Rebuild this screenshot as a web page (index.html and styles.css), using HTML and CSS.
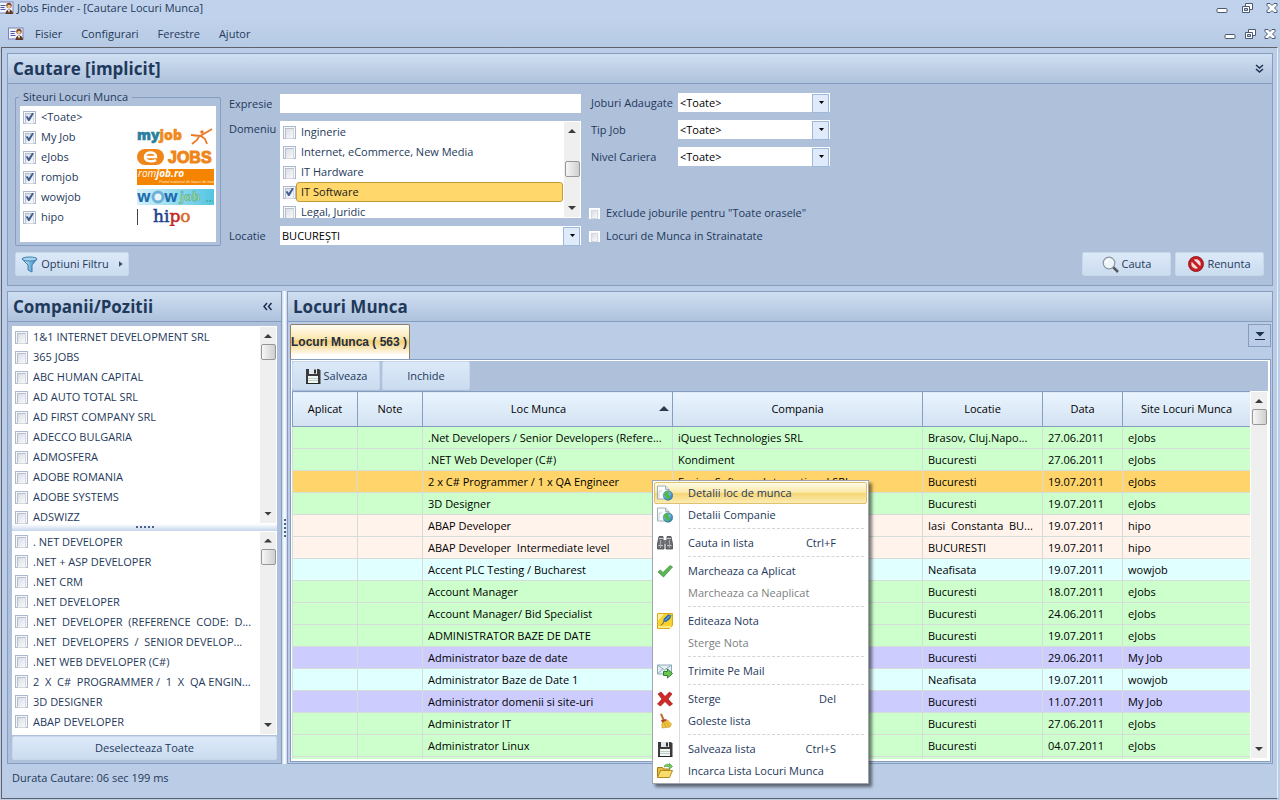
FILE: index.html
```html
<!DOCTYPE html>
<html lang="ro">
  <head>
    <meta charset="UTF-8" />
    <meta name="viewport" content="width=device-width, initial-scale=1.0" />
    <title>Jobs Finder - [Cautare Locuri Munca]</title>
    <link rel="stylesheet" href="styles.css">
  </head>
  <body>
    <svg class="sprite" width="0" height="0" aria-hidden="true">
      <defs>
        <linearGradient id="g-funnel" x1="0" x2="1">
          <stop offset="0" stop-color="#e6f5fc" />
          <stop offset="0.5" stop-color="#7fbbe0" />
          <stop offset="1" stop-color="#2c78b4" />
        </linearGradient>
        <linearGradient id="g-wow" x1="0" x2="1">
          <stop offset="0" stop-color="#d4f1fa" />
          <stop offset="1" stop-color="#52c4e2" />
        </linearGradient>
        <radialGradient id="g-globe" cx="0.35" cy="0.3" r="0.8">
          <stop offset="0" stop-color="#a8e0f8" />
          <stop offset="1" stop-color="#1c6fb4" />
        </radialGradient>
      </defs>
      <symbol id="i-app" viewBox="0 0 16 14">
        <rect x="0.5" y="1" width="14.5" height="11" fill="#f3f3fc" stroke="#7b83b8" />
        <path d="M2.500 4.500h5M2.500 6.500h4M2.500 8.500h5" stroke="#4a5aa8" />
        <circle cx="11" cy="4.500" r="2.700" fill="#7a4a22" />
        <circle cx="11" cy="5.500" r="1.800" fill="#f0c08c" />
        <path d="M7.500 13c0-6 7.500-6 7.500 0z" fill="#5f3a1e" />
        <path d="M10 9l1 3 1-3z" fill="#fff" />
      </symbol>
      <symbol id="i-min" viewBox="0 0 12 12">
        <rect x="1" y="6.500" width="10" height="4" rx="1" fill="#fff" stroke="#4b5a72" />
      </symbol>
      <symbol id="i-restore" viewBox="0 0 12 12">
        <path d="M4.500 1.500h7v6h-7z" fill="#fff" stroke="#4b5a72" />
        <path d="M1.500 4.500h7v6h-7z" fill="#fff" stroke="#4b5a72" />
        <path d="M3.500 6.500h3v2h-3z" fill="#b9cbe4" stroke="#4b5a72" />
      </symbol>
      <symbol id="i-close" viewBox="0 0 12 12">
        <path d="M1 1.500h3l2 2 2-2h3v2l-2.500 2.500 2.500 2.500v2H8l-2-2-2 2H1v-2L3.500 6 1 3.500z" fill="#fff" stroke="#4b5a72" />
      </symbol>
      <symbol id="i-floppy" viewBox="0 0 16 16">
        <path d="M1 1h13l1.500 1.500V15H1z" fill="#3c3a3a" />
        <rect x="4" y="1" width="8" height="5" fill="#dfe8ee" />
        <rect x="9" y="1.500" width="2" height="4" fill="#333" />
        <rect x="3" y="8" width="10" height="7" fill="#f4f6f6" />
        <path d="M3 10.500h10M3 12.500h10" stroke="#b9d2c4" />
        <path d="M1 15.500h14.500" stroke="#1f2b27" />
      </symbol>
      <symbol id="i-docglobe" viewBox="0 0 16 16">
        <path d="M0.500 1h8l3.500 3.500V14H0.500z" fill="#fbfcfd" stroke="#9fb0b8" />
        <path d="M8.500 1v3.500H12" fill="#dfe6ea" stroke="#9fb0b8" />
        <path d="M2 14V6h3" fill="none" stroke="#c7d2d8" />
        <circle cx="11" cy="10.500" r="4.800" fill="url(#g-globe)" stroke="#3b6f94" stroke-width="0.500" />
        <path d="M7 9c1-2.500 4-3.500 5-2.500s-1 1.500-.5 3 2 1 1.500 2.500-2 3-3 2.500-.5-2-1.500-3S7 10.500 7 9z" fill="#4fb848" />
      </symbol>
      <symbol id="i-binoc" viewBox="0 0 16 16">
        <path d="M2 1.500h4v3l1 1v8.500H0.500V9zM14 1.500h-4v3l-1 1v8.500h6.500V9z" fill="#6d6f73" stroke="#48494c" stroke-width="0.800" />
        <rect x="6.500" y="5" width="3" height="4" fill="#77797d" />
        <path d="M2 3.500h4M10 3.500h4M1.500 10.500h4.500M10 10.500h4.500" stroke="#c9cbce" />
        <path d="M3.500 5v8M12.500 5v8" stroke="#a7a9ac" />
      </symbol>
      <symbol id="i-check" viewBox="0 0 16 16">
        <path d="M1 9l2.500-2L6 9.500 13 2.500 15.500 4 6.500 14z" fill="#5cb655" stroke="#3b8a3a" stroke-width="0.700" />
      </symbol>
      <symbol id="i-note" viewBox="0 0 16 16">
        <path d="M0.500 0.500h15v12l-3 3h-12z" fill="#f8d12e" stroke="#d9a91b" />
        <path d="M1 1h6l-6 7z" fill="#fdf0a4" />
        <path d="M1 13h13v2H1z" fill="#fbe886" />
        <path d="M14.500 2l-3.500-.5-4 4-1 3 3 .5 4-3z" fill="#2a67a8" />
        <path d="M13 2.500l-5 5" stroke="#9cc6ea" />
        <path d="M7 9l-3 3.500" stroke="#555" />
      </symbol>
      <symbol id="i-mail" viewBox="0 0 16 16">
        <path d="M0.500 2h14v9h-14z" fill="#e6eff5" stroke="#8ea9b9" />
        <path d="M0.500 2l7 5 7-5M0.500 11l5-5M14.500 11l-5-5" fill="none" stroke="#8ea9b9" />
        <path d="M6.500 8.500h4V6l5 4.500-5 4.500v-2.500h-4z" fill="#6cc451" stroke="#2f8430" />
      </symbol>
      <symbol id="i-x" viewBox="0 0 16 16">
        <path d="M1 3l3-2 4 4.500L12.500 1 15 3l-4 5 4.500 5-3 2L8 10.500 3.500 15 0.500 13 5 8z" fill="#cf2a27" stroke="#9d1b1b" stroke-width="0.700" />
      </symbol>
      <symbol id="i-broom" viewBox="0 0 16 16">
        <path d="M3 1l2-.500 2.500 6-2 .5z" fill="#b9702e" />
        <path d="M4 7l5-1 1.500 2-5 2.500z" fill="#b3392c" />
        <path d="M5 10l5.500-3 4 4-1.500 3-8 1z" fill="#f3c83d" stroke="#c8962a" stroke-width="0.700" />
        <path d="M7 10l2 4M9 9l3 4" stroke="#b98c25" stroke-width="0.700" />
      </symbol>
      <symbol id="i-folder" viewBox="0 0 16 16">
        <path d="M0.500 14.500V4.500h5l1 1.500h6v3" fill="#e9b93b" stroke="#a97d1a" />
        <path d="M0.500 14.500l3-7h12l-3 7z" fill="#fadc6c" stroke="#b58a22" />
        <path d="M7 4c1-3 4-3.500 5.500-2V.5l3 3-3 2.500V4.500C11 3 9 3 7 4z" fill="#7acb62" stroke="#43953a" stroke-width="0.700" />
      </symbol>
    </svg>

    <header class="titlebar">
      <svg class="title-icon" width="16" height="14"><use href="#i-app" /></svg>
      <span class="title">Jobs Finder - [Cautare Locuri Munca]</span>
      <div class="win-controls">
        <button type="button" aria-label="Minimizare"><svg width="12" height="12"><use href="#i-min" /></svg></button>
        <button type="button" aria-label="Restaurare"><svg width="12" height="12"><use href="#i-restore" /></svg></button>
        <button type="button" aria-label="Inchidere"><svg width="12" height="12"><use href="#i-close" /></svg></button>
      </div>
    </header>
    <nav class="menubar">
      <svg width="16" height="14"><use href="#i-app" /></svg>
      <button type="button">Fisier</button>
      <button type="button">Configurari</button>
      <button type="button">Ferestre</button>
      <button type="button">Ajutor</button>
      <div class="win-controls child">
        <button type="button" aria-label="Minimizare"><svg width="12" height="12"><use href="#i-min" /></svg></button>
        <button type="button" aria-label="Restaurare"><svg width="12" height="12"><use href="#i-restore" /></svg></button>
        <button type="button" aria-label="Inchidere"><svg width="12" height="12"><use href="#i-close" /></svg></button>
      </div>
    </nav>

    <main class="workspace">
      <section class="panel search">
        <div class="panel-head">
          <h2>Cautare [implicit]</h2>
          <button type="button" class="fold" aria-label="Restrange">
            <svg width="9" height="10" viewBox="0 0 9 10"><path d="M1 1l3.500 3L8 1M1 5l3.500 3L8 5" fill="none" stroke="#1b2f50" stroke-width="1.500" /></svg>
          </button>
        </div>
        <form class="search-body">
          <div class="fields">
            <fieldset class="sites">
              <legend>Siteuri Locuri Munca</legend>
              <div class="site-list">
                <label><input type="checkbox" checked /><span>&lt;Toate&gt;</span></label>
                <label><input type="checkbox" checked /><span>My Job</span>
                  <svg class="logo" width="77" height="20" viewBox="0 0 77 20">
                    <text x="0" y="13" font-family="Open Sans" font-weight="800" font-size="14" fill="#2b7fa0" stroke="#2b7fa0" stroke-width="0.500">my<tspan fill="#f08a1c" stroke="#f08a1c">job</tspan></text>
                    <path d="M54 8l9 1 7-4 5-3M63 8l-3 5-5 4M64 9l4 3 2 5" fill="none" stroke="#ea7a28" stroke-width="1.800" />
                    <circle cx="65" cy="5" r="1.800" fill="#ea7a28" />
                  </svg>
                </label>
                <label><input type="checkbox" checked /><span>eJobs</span>
                  <svg class="logo" width="77" height="18" viewBox="0 0 77 18">
                    <rect x="0" y="1" width="27" height="16" rx="8" fill="#f08519" />
                    <path d="M8 9h11c0-6-11-6-11 0 0 5 8 5 11 3" fill="none" stroke="#fff" stroke-width="2.500" />
                    <text x="31" y="15" font-family="Liberation Sans" font-weight="700" font-size="16" fill="#f08519" stroke="#f08519">JOBS</text>
                  </svg>
                </label>
                <label><input type="checkbox" checked /><span>romjob</span>
                  <svg class="logo" width="77" height="16" viewBox="0 0 77 16">
                    <rect width="77" height="16" fill="#f58400" />
                    <text x="1" y="8" font-family="Open Sans" font-style="italic" font-size="10" fill="#fff">rom<tspan font-weight="700">job.ro</tspan></text>
                    <text x="22" y="14" font-family="Liberation Sans" font-style="italic" font-size="4" fill="#ffe9c8">Portal national de locuri de munca</text>
                  </svg>
                </label>
                <label><input type="checkbox" checked /><span>wowjob</span>
                  <svg class="logo" width="77" height="16" viewBox="0 0 77 16">
                    <rect width="77" height="16" fill="url(#g-wow)" />
                    <text x="0" y="13" font-family="Open Sans" font-weight="700" font-size="16" fill="#1c6cae">w</text>
                    <circle cx="21" cy="8" r="5" fill="#e8f6fb" stroke="#6fb0d8" stroke-width="3" />
                    <text x="27" y="13" font-family="Open Sans" font-weight="700" font-size="16" fill="#1c6cae">w</text>
                    <text x="43" y="12" font-family="Open Sans" font-weight="700" font-size="13" fill="#a9dd84" stroke="#3f9fae" stroke-width="0.500">job</text>
                    <path d="M69 12h7" stroke="#3aa06a" stroke-dasharray="2 1" />
                  </svg>
                </label>
                <label><input type="checkbox" checked /><span>hipo</span>
                  <svg class="logo" width="77" height="18" viewBox="0 0 77 18">
                    <path d="M0.500 1v16" stroke="#3c4654" />
                    <text x="16" y="14" font-family="DejaVu Serif" font-size="17" fill="#1d3d8f" stroke="#1d3d8f" stroke-width="0.500">hi<tspan fill="#c3271f" stroke="#c3271f">p</tspan><tspan fill="#d9672a" stroke="#d9672a">o</tspan></text>
                  </svg>
                </label>
              </div>
            </fieldset>

            <div class="criteria">
              <label for="expresie">Expresie</label>
              <input type="text" id="expresie" />
              <span class="top-label">Domeniu</span>
              <div class="listbox domain">
                <div class="rows">
                  <label><input type="checkbox" /><span>Inginerie</span></label>
                  <label><input type="checkbox" /><span>Internet, eCommerce, New Media</span></label>
                  <label><input type="checkbox" /><span>IT Hardware</span></label>
                  <label class="picked"><input type="checkbox" checked /><span>IT Software</span></label>
                  <label><input type="checkbox" /><span>Legal, Juridic</span></label>
                </div>
                <div class="scroll middle"><i class="up"></i><i class="thumb"></i><i class="down"></i></div>
              </div>
              <label for="locatie">Locatie</label>
              <div class="combo"><select id="locatie"><option>BUCUREŞTI</option></select></div>
            </div>

            <div class="options">
              <div class="combos">
                <label for="adaugate">Joburi Adaugate</label>
                <div class="combo"><select id="adaugate"><option>&lt;Toate&gt;</option></select></div>
                <label for="tip">Tip Job</label>
                <div class="combo"><select id="tip"><option>&lt;Toate&gt;</option></select></div>
                <label for="nivel">Nivel Cariera</label>
                <div class="combo"><select id="nivel"><option>&lt;Toate&gt;</option></select></div>
              </div>
              <div class="flags">
                <label><input type="checkbox" class="flat" />Exclude joburile pentru "Toate orasele"</label>
                <label><input type="checkbox" class="flat" />Locuri de Munca in Strainatate</label>
              </div>
            </div>
          </div>
          <div class="actions">
            <button type="button" class="btn filter">
              <svg width="17" height="17" viewBox="0 0 17 17"><path d="M1 3l6 6v5l4 2V9l5-6z" fill="url(#g-funnel)" stroke="#3b7fae" /><ellipse cx="8.500" cy="3" rx="7.500" ry="2" fill="#a8d4ee" stroke="#3b7fae" /></svg>
              Optiuni Filtru
              <i class="more"></i>
            </button>
            <button type="button" class="btn go">
              <svg width="17" height="17" viewBox="0 0 17 17"><path d="M11 11l5 5" stroke="#55595f" stroke-width="2.500" /><circle cx="7" cy="7" r="5.800" fill="#eef5fa" stroke="#8d949c" stroke-width="1.200" /><path d="M4 7a3 3 0 0 1 3-3" fill="none" stroke="#fff" stroke-width="1.500" /></svg>
              Cauta
            </button>
            <button type="button" class="btn go">
              <svg width="16" height="16" viewBox="0 0 16 16"><circle cx="8" cy="8" r="6.200" fill="#f3dede" stroke="#c22026" stroke-width="3" /><path d="M4 4l8 8" stroke="#c22026" stroke-width="3" /><circle cx="8" cy="8" r="7.500" fill="none" stroke="#8f161b" stroke-width="0.700" /></svg>
              Renunta
            </button>
          </div>
        </form>
      </section>

      <div class="lower">
        <aside class="panel companies">
          <div class="panel-head">
            <h2>Companii/Pozitii</h2>
            <button type="button" class="fold" aria-label="Ascunde">
              <svg width="10" height="9" viewBox="0 0 10 9"><path d="M4 1L1 4.500 4 8M8.500 1l-3 3.500 3 3.500" fill="none" stroke="#1b2f50" stroke-width="1.500" /></svg>
            </button>
          </div>
          <div class="lists">
            <div class="listbox firms">
              <div class="rows">
                <label><input type="checkbox" /><span>1&amp;1 INTERNET DEVELOPMENT SRL</span></label>
                <label><input type="checkbox" /><span>365 JOBS</span></label>
                <label><input type="checkbox" /><span>ABC HUMAN CAPITAL</span></label>
                <label><input type="checkbox" /><span>AD AUTO TOTAL SRL</span></label>
                <label><input type="checkbox" /><span>AD FIRST COMPANY SRL</span></label>
                <label><input type="checkbox" /><span>ADECCO BULGARIA</span></label>
                <label><input type="checkbox" /><span>ADMOSFERA</span></label>
                <label><input type="checkbox" /><span>ADOBE ROMANIA</span></label>
                <label><input type="checkbox" /><span>ADOBE SYSTEMS</span></label>
                <label><input type="checkbox" /><span>ADSWIZZ</span></label>
              </div>
              <div class="scroll"><i class="up"></i><i class="thumb"></i><i class="down"></i></div>
            </div>
            <div class="grip"></div>
            <div class="listbox positions">
              <div class="rows">
                <label><input type="checkbox" /><span>. NET DEVELOPER</span></label>
                <label><input type="checkbox" /><span>.NET + ASP DEVELOPER</span></label>
                <label><input type="checkbox" /><span>.NET CRM</span></label>
                <label><input type="checkbox" /><span>.NET DEVELOPER</span></label>
                <label><input type="checkbox" /><span>.NET&nbsp; DEVELOPER&nbsp; (REFERENCE&nbsp; CODE:&nbsp; D...</span></label>
                <label><input type="checkbox" /><span>.NET&nbsp; DEVELOPERS&nbsp; /&nbsp; SENIOR DEVELOP...</span></label>
                <label><input type="checkbox" /><span>.NET WEB DEVELOPER (C#)</span></label>
                <label><input type="checkbox" /><span>2&nbsp; X&nbsp; C#&nbsp; PROGRAMMER /&nbsp; 1&nbsp; X&nbsp; QA ENGIN...</span></label>
                <label><input type="checkbox" /><span>3D DESIGNER</span></label>
                <label><input type="checkbox" /><span>ABAP DEVELOPER</span></label>
              </div>
              <div class="scroll"><i class="up"></i><i class="thumb"></i><i class="down"></i></div>
            </div>
            <button type="button" class="btn wide">Deselecteaza Toate</button>
          </div>
        </aside>

        <div class="splitter"></div>

        <section class="panel jobs">
          <div class="panel-head"><h2>Locuri Munca</h2></div>
          <div class="tabs">
            <button type="button" class="tab">Locuri Munca ( 563 )</button>
            <button type="button" class="tab-menu" aria-label="Lista taburi">
              <svg width="10" height="10" viewBox="0 0 10 10"><path d="M0.500 1h9L5 5.500zM0 8h10v1H0z" fill="#1b2f50" /></svg>
            </button>
          </div>
          <div class="tab-page">
            <div class="toolbar">
              <button type="button" class="btn"><svg width="16" height="16"><use href="#i-floppy" /></svg>Salveaza</button>
              <button type="button" class="btn">Inchide</button>
            </div>
            <div class="grid-area">
              <div class="grid-clip">
                <table>
                  <colgroup>
                    <col class="c-flag" /><col class="c-flag" /><col class="c-name" /><col class="c-name" /><col class="c-place" /><col class="c-date" /><col class="c-site" />
                  </colgroup>
                  <thead>
                    <tr><th>Aplicat</th><th>Note</th><th class="sorted">Loc Munca</th><th>Compania</th><th>Locatie</th><th>Data</th><th>Site Locuri Munca</th></tr>
                  </thead>
                  <tbody>
                    <tr class="ejobs"><td></td><td></td><td>.Net Developers / Senior Developers (Refere...</td><td>iQuest Technologies SRL</td><td>Brasov, Cluj.Napo...</td><td>27.06.2011</td><td>eJobs</td></tr>
                    <tr class="ejobs"><td></td><td></td><td>.NET Web Developer (C#)</td><td>Kondiment</td><td>Bucuresti</td><td>27.06.2011</td><td>eJobs</td></tr>
                    <tr class="current"><td></td><td></td><td>2 x C# Programmer / 1 x QA Engineer</td><td>Fusion Software International SRL</td><td>Bucuresti</td><td>19.07.2011</td><td>eJobs</td></tr>
                    <tr class="ejobs"><td></td><td></td><td>3D Designer</td><td></td><td>Bucuresti</td><td>19.07.2011</td><td>eJobs</td></tr>
                    <tr class="hipo"><td></td><td></td><td>ABAP Developer</td><td></td><td>Iasi&nbsp; Constanta&nbsp; BU...</td><td>19.07.2011</td><td>hipo</td></tr>
                    <tr class="hipo"><td></td><td></td><td>ABAP Developer&nbsp; Intermediate level</td><td></td><td>BUCURESTI</td><td>19.07.2011</td><td>hipo</td></tr>
                    <tr class="wowjob"><td></td><td></td><td>Accent PLC Testing / Bucharest</td><td></td><td>Neafisata</td><td>19.07.2011</td><td>wowjob</td></tr>
                    <tr class="ejobs"><td></td><td></td><td>Account Manager</td><td></td><td>Bucuresti</td><td>18.07.2011</td><td>eJobs</td></tr>
                    <tr class="ejobs"><td></td><td></td><td>Account Manager/ Bid Specialist</td><td></td><td>Bucuresti</td><td>24.06.2011</td><td>eJobs</td></tr>
                    <tr class="ejobs"><td></td><td></td><td>ADMINISTRATOR BAZE DE DATE</td><td></td><td>Bucuresti</td><td>19.07.2011</td><td>eJobs</td></tr>
                    <tr class="myjob"><td></td><td></td><td>Administrator baze de date</td><td></td><td>Bucuresti</td><td>29.06.2011</td><td>My Job</td></tr>
                    <tr class="wowjob"><td></td><td></td><td>Administrator Baze de Date 1</td><td></td><td>Neafisata</td><td>19.07.2011</td><td>wowjob</td></tr>
                    <tr class="myjob"><td></td><td></td><td>Administrator domenii si site-uri</td><td></td><td>Bucuresti</td><td>11.07.2011</td><td>My Job</td></tr>
                    <tr class="ejobs"><td></td><td></td><td>Administrator IT</td><td></td><td>Bucuresti</td><td>27.06.2011</td><td>eJobs</td></tr>
                    <tr class="ejobs"><td></td><td></td><td>Administrator Linux</td><td></td><td>Bucuresti</td><td>04.07.2011</td><td>eJobs</td></tr>
                    <tr class="ejobs"><td></td><td></td><td></td><td></td><td></td><td></td><td></td></tr>
                  </tbody>
                </table>
              </div>
              <div class="scroll"><i class="up"></i><i class="thumb"></i><i class="down"></i></div>
            </div>
          </div>

          <div class="context-menu" role="menu">
            <button type="button" class="hot"><svg width="16" height="16"><use href="#i-docglobe" /></svg><span>Detalii loc de munca</span></button>
            <button type="button"><svg width="16" height="16"><use href="#i-docglobe" /></svg><span>Detalii Companie</span></button>
            <hr />
            <button type="button"><svg width="16" height="16"><use href="#i-binoc" /></svg><span>Cauta in lista</span><kbd>Ctrl+F</kbd></button>
            <hr />
            <button type="button"><svg width="16" height="16"><use href="#i-check" /></svg><span>Marcheaza ca Aplicat</span></button>
            <button type="button" disabled><svg width="16" height="16"></svg><span>Marcheaza ca Neaplicat</span></button>
            <hr />
            <button type="button"><svg width="16" height="16"><use href="#i-note" /></svg><span>Editeaza Nota</span></button>
            <button type="button" disabled><svg width="16" height="16"></svg><span>Sterge Nota</span></button>
            <hr />
            <button type="button"><svg width="16" height="16"><use href="#i-mail" /></svg><span>Trimite Pe Mail</span></button>
            <hr />
            <button type="button"><svg width="16" height="16"><use href="#i-x" /></svg><span>Sterge</span><kbd>Del</kbd></button>
            <button type="button"><svg width="16" height="16"><use href="#i-broom" /></svg><span>Goleste lista</span></button>
            <hr />
            <button type="button"><svg width="16" height="16"><use href="#i-floppy" /></svg><span>Salveaza lista</span><kbd>Ctrl+S</kbd></button>
            <button type="button"><svg width="16" height="16"><use href="#i-folder" /></svg><span>Incarca Lista Locuri Munca</span></button>
          </div>
        </section>
      </div>

      <footer class="status">Durata Cautare: 06 sec 199 ms</footer>
    </main>
  </body>
</html>
```
FILE: styles.css
```css
* {
  box-sizing: border-box;
}
body {
  margin: 0;
  height: 100vh;
  min-height: 640px;
  display: flex;
  flex-direction: column;
  overflow: hidden;
  background: #bbcde6;
  color: #1e395b;
  font: 11px/16px "Open Sans", "Noto Sans", sans-serif;
}
button,
input,
select {
  font: inherit;
  color: inherit;
}
button {
  padding: 0;
  border: 0;
  background: none;
}
svg {
  display: block;
  flex: none;
}
.sprite {
  position: absolute;
}

/* title and menu */
.titlebar {
  display: flex;
  align-items: center;
  height: 18px;
  padding: 0 2px 3px 0;
  background: #c1d3ec;
}
.title-icon {
  margin-left: -2px;
}
.title {
  margin-left: 3px;
}
.win-controls {
  display: flex;
  gap: 13px;
  margin-left: auto;
}
.win-controls.child {
  gap: 8px;
}
.menubar {
  display: flex;
  align-items: center;
  gap: 19px;
  height: 29px;
  padding: 2px 4px 0 8px;
  background: linear-gradient(#c1d3ec, #b7cae3);
}
.menubar > svg {
  margin-right: -8px;
}

/* frame */
.workspace {
  flex: 1;
  min-height: 0;
  display: flex;
  flex-direction: column;
  margin: 0 2px 1px 1px;
  padding: 5px 4px 0 5px;
  border: 1px solid #5f6068;
  border-right-color: #e9eef6;
}
.panel {
  display: flex;
  flex-direction: column;
  border: 1px solid #859dbf;
  background: #aec0da;
}
.panel-head {
  display: flex;
  align-items: center;
  justify-content: space-between;
  height: 30px;
  padding: 0 8px 0 5px;
  border-bottom: 1px solid #859dbf;
  background: linear-gradient(#d0dff2, #aec2dc);
}
h2 {
  margin: 0;
  font-size: 17px;
  line-height: 24px;
  font-weight: 700;
}

/* tick boxes */
input[type="checkbox"] {
  appearance: none;
  flex: none;
  position: relative;
  width: 13px;
  height: 13px;
  margin: 0;
  padding: 1px;
  border: 1px solid #abb8d0;
  background: #f6f7fa;
}
input[type="checkbox"]::before {
  content: "";
  display: block;
  height: 9px;
  border: 1px solid #b7bfcc;
  border-right-color: #d3d8e0;
  border-bottom-color: #d3d8e0;
  background: linear-gradient(135deg, #d8dde6, #fafafa);
}
input[type="checkbox"].flat {
  width: 11px;
  height: 11px;
  border-color: #fff;
}
input[type="checkbox"].flat::before {
  height: 7px;
  border-color: #d5d9e0;
}
input[type="checkbox"]:checked::after {
  content: "";
  position: absolute;
  inset: 1px;
  background: #3f5c92;
  clip-path: polygon(8% 48%, 26% 38%, 42% 62%, 80% 4%, 98% 10%, 50% 94%, 36% 94%);
}

/* search panel */
.search-body {
  padding: 6px 8px 9px 7px;
}
.fields {
  display: flex;
}
.sites {
  width: 206px;
  height: 156px;
  margin: 0;
  padding: 0 4px 3px;
  border: 1px solid #859dbf;
  border-radius: 2px;
}
.sites legend {
  margin-left: -1px;
  padding: 0 4px;
  line-height: 14px;
}
.site-list {
  height: 136px;
  margin-top: 2px;
  padding: 1px 2px 1px 3px;
  background: #fff;
}
.site-list label {
  display: flex;
  align-items: center;
  height: 20px;
}
.site-list span {
  margin-left: 5px;
}
.logo {
  margin-left: auto;
}
.criteria {
  display: grid;
  grid-template-columns: 51px 301px;
  grid-template-rows: 19px 97px 19px;
  row-gap: 8px;
  margin: 4px 0 0 8px;
  align-content: start;
  align-items: center;
}
.criteria input[type="text"] {
  height: 19px;
  border: 0;
  background: #fff;
}
.top-label {
  align-self: start;
}
.listbox {
  display: flex;
  min-height: 0;
  overflow: hidden;
  background: #fff;
}
.domain {
  height: 97px;
}
.rows {
  flex: 1;
  min-width: 0;
  padding: 1px 2px 0 3px;
  overflow: hidden;
}
.rows label {
  display: flex;
  align-items: center;
  height: 20px;
}
.rows span {
  flex: 1;
  padding: 1px 4px;
  border: 1px solid transparent;
  white-space: nowrap;
}
.rows .picked span {
  border-color: #c29b3d;
  border-radius: 3px;
  background: #ffd76b;
  color: #1a1a1a;
}
.domain .rows {
  padding-right: 0;
}

/* scroll bars */
.scroll {
  display: flex;
  flex-direction: column;
  align-items: center;
  width: 16px;
  margin: 1px;
  background: #efefef;
}
.up,
.down {
  width: 8px;
  height: 4px;
  margin: 7px 0 6px;
  background: #3c3c3c;
  clip-path: polygon(50% 0, 100% 100%, 0 100%);
}
.down {
  margin: auto 0 7px;
  clip-path: polygon(0 0, 100% 0, 50% 100%);
}
.thumb {
  width: 15px;
  height: 16px;
  border: 1px solid #979797;
  border-radius: 2px;
  background: linear-gradient(90deg, #f6f6f6, #cfcfcf);
}
.middle .thumb {
  margin-top: 22px;
}

.combo {
  position: relative;
}
.combo select {
  appearance: none;
  display: block;
  width: 100%;
  height: 19px;
  padding: 0 22px 0 2px;
  border: 0;
  border-radius: 0;
  background: #fff;
  color: #000;
}
.combo::before {
  content: "";
  position: absolute;
  top: 1px;
  right: 1px;
  width: 15px;
  height: 17px;
  border: 1px solid #9db8d9;
  background: #dfeafa;
  pointer-events: none;
}
.combo::after {
  content: "";
  position: absolute;
  top: 8px;
  right: 6px;
  width: 5px;
  height: 3px;
  background: #000;
  clip-path: polygon(0 0, 100% 0, 50% 100%);
  pointer-events: none;
}
.options {
  display: flex;
  flex-direction: column;
  margin: 3px 0 0 8px;
}
.combos {
  display: grid;
  grid-template-columns: 87px 152px;
  row-gap: 8px;
  padding-left: 2px;
  align-items: center;
}
.flags {
  display: flex;
  flex-direction: column;
  gap: 7px;
  margin-top: 39px;
}
.flags label {
  display: flex;
  align-items: center;
  gap: 6px;
}
.actions {
  display: flex;
  gap: 4px;
  margin-top: 6px;
}
.btn {
  display: flex;
  align-items: center;
  justify-content: center;
  gap: 3px;
  height: 24px;
  border: 1px solid #c8d8ec;
  border-radius: 2px;
  background: linear-gradient(#dce9f8, #cbdcf0);
}
.filter {
  width: 114px;
  margin-right: auto;
}
.more {
  width: 4px;
  height: 6px;
  margin-left: 7px;
  background: #3c4f6e;
  clip-path: polygon(0 0, 100% 50%, 0 100%);
}
.go {
  width: 89px;
}

/* lower half */
.lower {
  flex: 1;
  min-height: 0;
  display: flex;
  margin-top: 5px;
}
.companies {
  width: 275px;
}
.companies .panel-head,
.jobs .panel-head {
  flex: none;
}
.lists {
  flex: 1;
  min-height: 0;
  display: flex;
  flex-direction: column;
  padding: 4px 4px 3px;
}
.firms {
  flex: 1 1 197px;
}
.positions {
  flex: 1 1 204px;
}
.grip {
  flex: none;
  height: 7px;
  padding-top: 2px;
  background: linear-gradient(#fff, #c4d5ec);
}
.grip::before,
.splitter::before {
  content: "";
  display: block;
  width: 18px;
  height: 2px;
  margin: 0 auto;
  background: repeating-linear-gradient(90deg, #4b6286 0 2px, transparent 2px 4px);
}
.wide {
  flex: none;
  margin-top: 1px;
}
.splitter {
  display: flex;
  align-items: center;
  width: 5px;
  background: linear-gradient(90deg, #c5d6ed, #fff, #c5d6ed);
}
.splitter::before {
  width: 2px;
  height: 18px;
  background: repeating-linear-gradient(#4b6286 0 2px, transparent 2px 4px);
}
.jobs {
  position: relative;
  flex: 1;
  min-width: 0;
  background: #bbcde6;
}
.tabs {
  display: flex;
  flex: none;
  align-items: flex-start;
  justify-content: space-between;
  padding: 2px 1px 0 2px;
}
.tab {
  width: 120px;
  height: 35px;
  border: 1px solid #8e8068;
  border-bottom: 0;
  border-radius: 2px 2px 0 0;
  background: linear-gradient(#fffdf4, #fbe7b0 40%, #f5d076 48%, #fff 90%);
  color: #222e42;
  font: bold 12px/16px "Liberation Sans", Arial, sans-serif;
  text-align: left;
  white-space: nowrap;
}
.tab-menu {
  display: flex;
  align-items: center;
  justify-content: center;
  width: 23px;
  height: 23px;
  border: 1px solid #859dbf;
}
.tab-page {
  flex: 1;
  min-height: 0;
  display: flex;
  flex-direction: column;
  margin: 0 1px 1px 2px;
  border: 1px solid #859dbf;
  padding: 1px 2px 2px 1px;
  background: #fff;
}
.toolbar {
  display: flex;
  flex: none;
  gap: 2px;
  padding-bottom: 1px;
  background: #aec0da;
}
.toolbar .btn {
  width: 88px;
  height: 29px;
}
.grid-area {
  flex: 1;
  min-height: 0;
  display: flex;
}
.grid-clip {
  flex: 1;
  min-width: 0;
  overflow: hidden;
}
table {
  width: 100%;
  table-layout: fixed;
  border-collapse: collapse;
  color: #000;
}
.c-flag {
  width: 65px;
}
.c-name {
  width: 250px;
}
.c-place {
  width: 120px;
}
.c-date {
  width: 80px;
}
.c-site {
  width: 128px;
}
th {
  height: 35px;
  padding: 0;
  border: 1px solid #859dbf;
  background: linear-gradient(#e9f4fe, #d3e2f2);
  font-weight: 400;
}
.sorted {
  position: relative;
  padding-right: 18px;
}
.sorted::after {
  content: "";
  position: absolute;
  top: 14px;
  right: 3px;
  width: 10px;
  height: 5px;
  background: #2c3a50;
  clip-path: polygon(50% 0, 100% 100%, 0 100%);
}
td {
  height: 22px;
  padding: 0 5px;
  border: 1px solid #d6dcd8;
  line-height: 20px;
  white-space: nowrap;
  overflow: hidden;
}
.ejobs {
  background: #ccffcc;
}
.current {
  background: #ffd56b;
}
.hipo {
  background: #fff3ec;
}
.wowjob {
  background: #e0ffff;
}
.myjob {
  background: #ccccff;
}

/* right-click menu, floats over the grid */
.context-menu {
  position: absolute;
  top: 188px;
  left: 364px;
  width: 217px;
  padding: 1px;
  border: 1px solid #a0a4ac;
  background: linear-gradient(90deg, #fff 26px, #d9dde3 26px 27px, #fff 27px);
  box-shadow: 3px 3px 3px rgba(0, 0, 0, 0.5);
}
.context-menu button {
  display: flex;
  align-items: center;
  width: 100%;
  height: 22px;
  padding: 0 30px 0 2px;
  border: 1px solid transparent;
  border-radius: 2px;
}
.context-menu span {
  margin-left: 15px;
}
.context-menu kbd {
  margin-left: auto;
  font: inherit;
}
.context-menu .hot {
  border-color: #dfc26d;
  background: linear-gradient(#fffbe6, #fbe7a4 48%, #f6d674 52%, #fcecb4);
}
.context-menu :disabled {
  color: #7d7f83;
}
.context-menu hr {
  height: 1px;
  margin: 2px 3px 3px 34px;
  border: 0;
  border-top: 1px dashed #d2d6dc;
}
.status {
  height: 34px;
  padding: 6px 5px;
}
```
